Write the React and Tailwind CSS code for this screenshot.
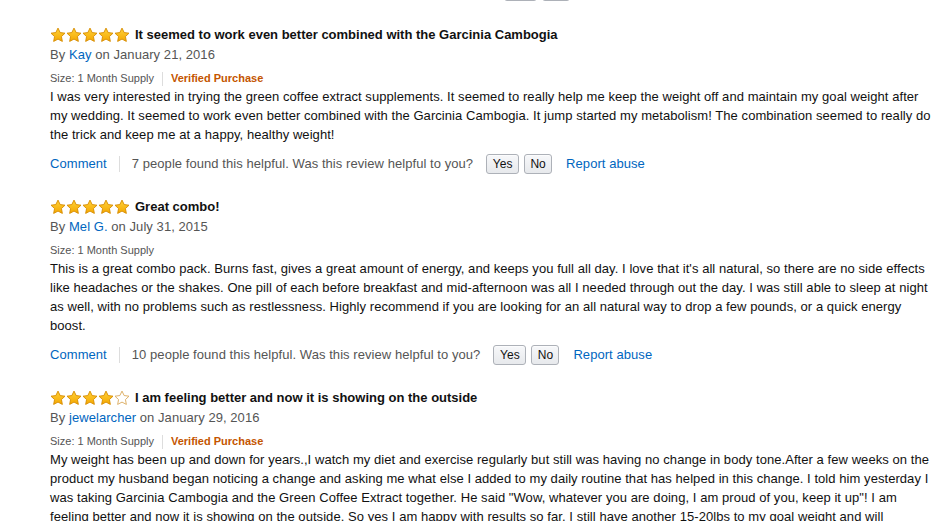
import React from 'react';

const reviews = [
  {
    stars: 5,
    title: 'It seemed to work even better combined with the Garcinia Cambogia',
    author: 'Kay',
    date: 'January 21, 2016',
    verified: true,
    body: 'I was very interested in trying the green coffee extract supplements. It seemed to really help me keep the weight off and maintain my goal weight after my wedding. It seemed to work even better combined with the Garcinia Cambogia. It jump started my metabolism! The combination seemed to really do the trick and keep me at a happy, healthy weight!',
    helpful: 7,
  },
  {
    stars: 5,
    title: 'Great combo!',
    author: 'Mel G.',
    date: 'July 31, 2015',
    verified: false,
    body: "This is a great combo pack. Burns fast, gives a great amount of energy, and keeps you full all day. I love that it's all natural, so there are no side effects like headaches or the shakes. One pill of each before breakfast and mid-afternoon was all I needed through out the day. I was still able to sleep at night as well, with no problems such as restlessness. Highly recommend if you are looking for an all natural way to drop a few pounds, or a quick energy boost.",
    helpful: 10,
  },
  {
    stars: 4,
    title: 'I am feeling better and now it is showing on the outside',
    author: 'jewelarcher',
    date: 'January 29, 2016',
    verified: true,
    body: 'My weight has been up and down for years.,I watch my diet and exercise regularly but still was having no change in body tone.After a few weeks on the product my husband began noticing a change and asking me what else I added to my daily routine that has helped in this change. I told him yesterday I was taking Garcinia Cambogia and the Green Coffee Extract together. He said "Wow, whatever you are doing, I am proud of you, keep it up"! I am feeling better and now it is showing on the outside. So yes I am happy with results so far. I still have another 15-20lbs to my goal weight and will continue taking both products until I get there. I would recommend this combo to anyone.',
    helpful: null,
  },
];

function Star({ filled }) {
  return (
    <svg width="16" height="16" viewBox="0 0 16 16" className="block">
      <defs>
        <linearGradient id="starGold" x1="0" y1="0" x2="0" y2="1">
          <stop offset="0" stopColor="#ffd23a" />
          <stop offset="1" stopColor="#f4a700" />
        </linearGradient>
      </defs>
      <path
        d="M8 1.1l2.15 4.45 4.85.65-3.55 3.35.9 4.85L8 12.1l-4.35 2.3.9-4.85L1 6.2l4.85-.65z"
        fill={filled ? 'url(#starGold)' : '#ffffff'}
        stroke={filled ? '#d68b00' : '#d9a85a'}
        strokeWidth="0.9"
        strokeLinejoin="round"
      />
    </svg>
  );
}

function Btn({ children, wide }) {
  return (
    <button
      className={`h-[20px] ${wide ? 'w-[33px]' : 'w-[28px]'} rounded-[3px] border border-[#adb1b8] bg-gradient-to-b from-[#f7f8fa] to-[#e7e9ec] p-0 text-center text-[12px] leading-[18px] text-[#111] shadow-[inset_0_1px_0_rgba(255,255,255,0.6)]`}
    >
      {children}
    </button>
  );
}

function Review({ r }) {
  return (
    <div className="mb-[23px]">
      <div className="flex h-[19px] items-center">
        <div className="flex">
          {[0, 1, 2, 3, 4].map((i) => (
            <Star key={i} filled={i < r.stars} />
          ))}
        </div>
        <span className="ml-[5px] text-[13px] font-bold leading-[19px] text-[#111]">{r.title}</span>
      </div>
      <div className="mt-[1px] text-[13px] leading-[20px] tracking-[0.06px] text-[#555]">
        By <span className="text-[#0066c0]">{r.author}</span> on {r.date}
      </div>
      <div className="mt-[5px] flex h-[17px] items-center text-[11px] text-[#555]">
        <span>Size: 1 Month Supply</span>
        {r.verified && (
          <>
            <span className="mx-[8px] h-[14px] w-px bg-[#ddd]" />
            <span className="font-bold text-[#c45500]">Verified Purchase</span>
          </>
        )}
      </div>
      <p className="text-[13px] leading-[19px] tracking-[0.06px] text-[#111]">{r.body}</p>
      {r.helpful !== null && (
        <div className="mt-[10px] flex h-[20px] items-center text-[13px] tracking-[0.06px]">
          <span className="text-[#0066c0]">Comment</span>
          <span className="mx-[12px] h-[16px] w-px bg-[#ddd]" />
          <span className="text-[#555]">{r.helpful} people found this helpful. Was this review helpful to you?</span>
          <span className="ml-[13px] flex gap-[5px]">
            <Btn wide>Yes</Btn>
            <Btn>No</Btn>
          </span>
          <span className="ml-[14px] text-[#0066c0]">Report abuse</span>
        </div>
      )}
    </div>
  );
}

export default function App() {
  return (
    <div className="h-[521px] w-[934px] overflow-hidden bg-white font-['Liberation_Sans',Arial,sans-serif]">
      <div className="-mt-[19px] flex h-[20px] gap-[5px] pl-[504px]">
        <span className="h-[20px] w-[33px] rounded-[3px] border border-[#adb1b8] bg-[#e7e9ec]" />
        <span className="h-[20px] w-[28px] rounded-[3px] border border-[#adb1b8] bg-[#e7e9ec]" />
      </div>
      <div className="pl-[50px] pt-[24px]">
        {reviews.map((r, i) => (
          <Review key={i} r={r} />
        ))}
      </div>
    </div>
  );
}
